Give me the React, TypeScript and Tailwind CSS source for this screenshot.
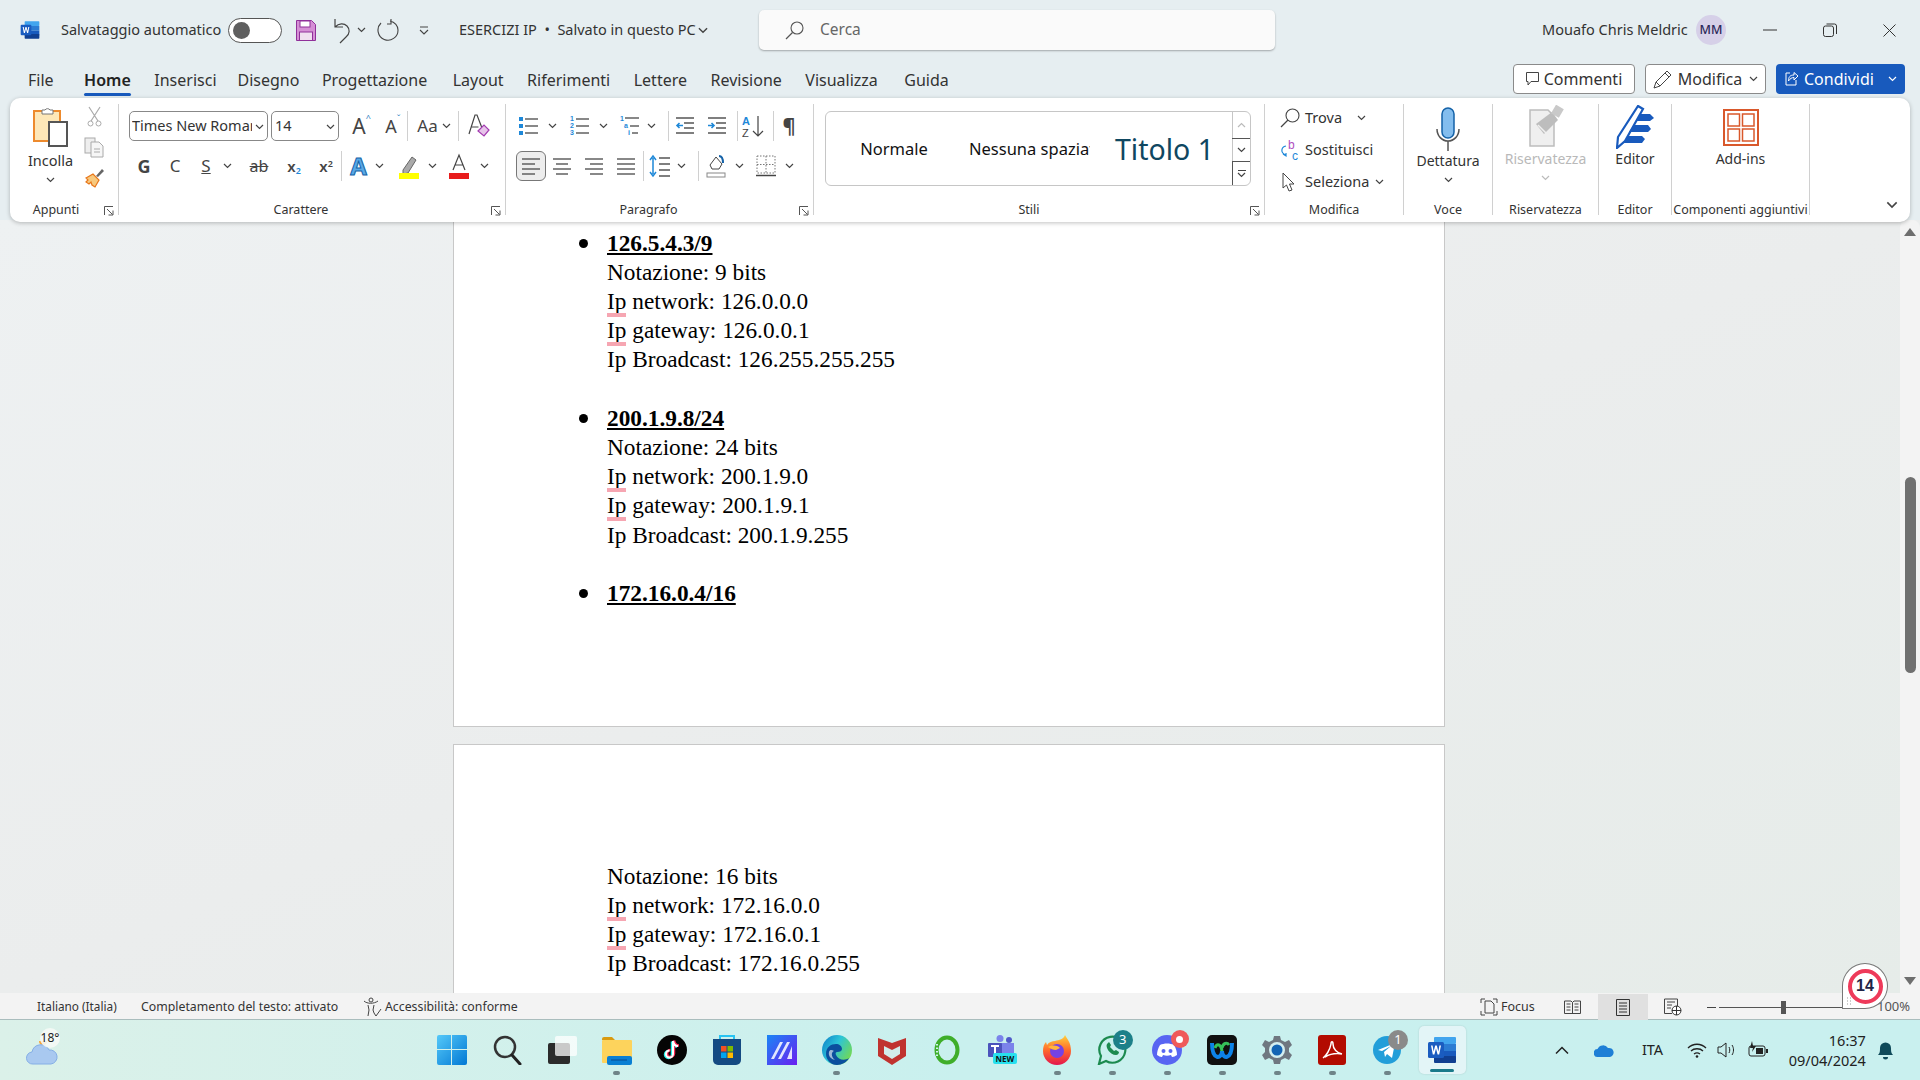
import React from "react";

const S = "#555";
const Chev = ({ c = "", color = "#444" }: { c?: string; color?: string }) => (
  <svg className={"w-[9px] h-[6px] shrink-0 " + c} viewBox="0 0 9 6"><path d="M1 1l3.5 3.5L8 1" fill="none" stroke={color} strokeWidth="1.2" /></svg>
);
const Launcher = () => (
  <svg className="w-[10px] h-[10px]" viewBox="0 0 10 10"><path d="M.5 9V.5H9M3 3l5.5 5.5M4.5 9H9V4.5" fill="none" stroke="#555" strokeWidth="1" /></svg>
);
const Div = ({ c = "h-[30px]" }: { c?: string }) => <div className={"w-px bg-[#d0d0d0] shrink-0 " + c} />;

const WordLogo = ({ c }: { c: string }) => (
  <svg className={c} viewBox="0 0 30 30">
    <rect x="7" y="2" width="22" height="7" rx="1" fill="#41a5ee" />
    <rect x="7" y="9" width="22" height="7" fill="#2b7cd3" />
    <rect x="7" y="16" width="22" height="7" fill="#185abd" />
    <rect x="7" y="21" width="22" height="7" rx="1" fill="#103f91" />
    <rect x="1" y="7" width="16" height="16" rx="1.5" fill="#1a5cc0" />
    <path d="M4 10.5l1.8 9h1.6l1.6-6 1.6 6h1.6l1.8-9h-1.6l-1 6-1.6-6H8.2l-1.6 6-1-6z" fill="#fff" />
  </svg>
);

const Lines = ({ rows, c = "w-[22px] h-[22px]" }: { rows: number[][]; c?: string }) => (
  <svg className={c} viewBox="0 0 22 22">
    {rows.map((r, i) => <path key={i} d={`M${r[0]} ${r[2]}H${r[1]}`} stroke={S} strokeWidth="1.4" fill="none" />)}
  </svg>
);

const Blue = "#1e88d8";
const BulletIcon = () => (
  <svg className="w-[22px] h-[22px]" viewBox="0 0 22 22">
    {[4, 11, 18].map((y) => <React.Fragment key={y}><rect x="1" y={y - 2} width="4" height="4" fill={Blue} /><path d={`M7 ${y}H20`} stroke={S} strokeWidth="1.4" /></React.Fragment>)}
  </svg>
);
const NumIcon = () => (
  <svg className="w-[22px] h-[22px]" viewBox="0 0 22 22">
    {[["1", 6], ["2", 13], ["3", 20]].map(([t, y]) => <React.Fragment key={t as string}><text x="1" y={y as number} fontSize="7" fontWeight="700" fill={Blue} fontFamily="Liberation Sans">{t}</text><path d={`M7 ${(y as number) - 2}H20`} stroke={S} strokeWidth="1.4" /></React.Fragment>)}
  </svg>
);
const MultiIcon = () => (
  <svg className="w-[22px] h-[22px]" viewBox="0 0 22 22">
    <text x="1" y="6" fontSize="7" fontWeight="700" fill={Blue} fontFamily="Liberation Sans">1</text>
    <path d="M6 3H20" stroke={S} strokeWidth="1.4" />
    <text x="5" y="13" fontSize="7" fontWeight="700" fill={Blue} fontFamily="Liberation Sans">a</text>
    <path d="M11 11H20" stroke={S} strokeWidth="1.4" />
    <text x="9" y="20" fontSize="7" fontWeight="700" fill={Blue} fontFamily="Liberation Sans">i</text>
    <path d="M13 18H19" stroke={S} strokeWidth="1.4" />
  </svg>
);
const IndentIcon = ({ inc }: { inc?: boolean }) => (
  <svg className="w-[22px] h-[22px] shrink-0" viewBox="0 0 22 22">
    <path d="M2 3H20M10 8H20M10 13H20M2 18H20" stroke={S} strokeWidth="1.4" />
    <path d={inc ? "M2 10.5H8M5.5 8l2.5 2.5L5.5 13" : "M9 10.5H3M5.5 8L3 10.5 5.5 13"} stroke={Blue} strokeWidth="1.6" fill="none" />
  </svg>
);

const Bar = ({ rowIcon, c }: { rowIcon: React.ReactNode; c: string }) => <div className={"flex justify-center items-center shrink-0 " + c}>{rowIcon}</div>;

function TitleBar() {
  return (
    <div className="h-[60px] flex items-center text-[14.5px] text-[#333] relative">
      <div className="ml-[20px] w-[41px]"><WordLogo c="w-[20px] h-[20px]" /></div>
      <span className="w-[167px] whitespace-nowrap">Salvataggio automatico</span>
      <div className="w-[54px] h-[25px] rounded-full border border-[#555] bg-white flex items-center pl-[4px]"><div className="w-[17px] h-[17px] rounded-full bg-[#5f5f5f]" /></div>
      <svg className="ml-[14px] w-[20px] h-[21px]" viewBox="0 0 20 21"><path d="M.5.5h15l4 4v16H.5z" fill="#d58fd5" stroke="#90309a" /><rect x="4" y="1" width="10" height="6" fill="#fff" stroke="#90309a" /><rect x="3.5" y="12" width="13" height="8.5" fill="#f0dff0" stroke="#90309a" /></svg>
      <svg className="ml-[14px] w-[22px] h-[27px]" viewBox="0 0 22 27"><path d="M5 2v8h8M5 10c4-4 9-4 12-1 3 3 3 8-1 11l-6 6" fill="none" stroke="#444" strokeWidth="1.2" /></svg>
      <Chev c="ml-[5px]" />
      <svg className="ml-[11px] w-[22px] h-[24px]" viewBox="0 0 22 24"><path d="M13 3c5 1 8 5 8 9a10 10 0 1 1-17-7M14 1v5h-4" fill="none" stroke="#444" strokeWidth="1.1" /></svg>
      <svg className="ml-[20px] w-[10px] h-[9px]" viewBox="0 0 10 9"><path d="M1 1h8M1 4l4 4 4-4" fill="none" stroke="#444" strokeWidth="1.1" /></svg>
      <span className="ml-[30px] whitespace-nowrap w-[233px]">ESERCIZI IP&nbsp; •&nbsp; Salvato in questo PC</span>
      <Chev c="w-[12px] h-[7px] ml-[5px]" />
      <div className="ml-[50px] w-[516px] h-[40px] bg-[#fafafa] rounded-[5px] shadow-[0_1px_2px_rgba(0,0,0,0.3)] flex items-center text-[#666] text-[15.5px]">
        <svg className="ml-[26px] w-[20px] h-[20px]" viewBox="0 0 20 20"><circle cx="12" cy="8" r="6" fill="none" stroke="#555" strokeWidth="1.1" /><path d="M7.5 12.5L1 19" stroke="#555" strokeWidth="1.3" /></svg>
        <span className="ml-[15px]">Cerca</span>
      </div>
      <span className="ml-[267px] w-[144px] whitespace-nowrap">Mouafo Chris Meldric</span>
      <div className="ml-[10px] w-[30px] h-[30px] rounded-full bg-[#d6d0e8] flex items-center justify-center text-[12.5px] text-[#2c2858] font-medium">MM</div>
      <svg className="ml-[37px] w-[14px] h-[2px]" viewBox="0 0 14 2"><path d="M0 1h14" stroke="#333" /></svg>
      <svg className="ml-[46px] w-[14px] h-[14px]" viewBox="0 0 14 14"><rect x=".5" y="3" width="10" height="10.5" rx="2" fill="none" stroke="#333" /><path d="M3.5 1h8a2 2 0 0 1 2 2v8" fill="none" stroke="#333" /></svg>
      <svg className="ml-[46px] w-[13px] h-[13px]" viewBox="0 0 13 13"><path d="M.5.5l12 12M12.5.5l-12 12" stroke="#333" /></svg>
    </div>
  );
}

function TabsRow() {
  const tabs: [string, string][] = [["File", ""], ["Home", "relative font-semibold text-[#222] ml-[7px]"], ["Inserisci", "relative mr-[-2.5px]"], ["Disegno", "relative mr-[-1px]"], ["Progettazione", "relative mr-[2px]"], ["Layout", "relative"], ["Riferimenti", "relative"], ["Lettere", "relative"], ["Revisione", "relative"], ["Visualizza", "relative mr-[3px]"], ["Guida", "relative"]];
  return (
    <div className="h-[38px] flex items-start text-[16px] text-[#333] relative">
      <div className="ml-[28px] flex gap-[23.5px] h-[36px] items-center mt-[2px]">
        {tabs.map(([t, c]) => (
          <div key={t} className={c}>
            {t}
            {t === "Home" && <div className="absolute left-0 right-0 top-[25px] h-[3px] rounded-full bg-[#185abd]" />}
          </div>
        ))}
      </div>
      <div className="ml-auto mr-[15px] mt-[4px] flex gap-[10px] h-[30px]">
        <div className="w-[122px] rounded-[4px] border border-[#8a8a8a] bg-white flex items-center justify-center gap-[5px]">
          <svg className="w-[13px] h-[14px]" viewBox="0 0 13 14"><path d="M.5.5h12v9H5L2 13V9.500H.5z" fill="none" stroke="#444" /></svg>Commenti
        </div>
        <div className="w-[121px] rounded-[4px] border border-[#8a8a8a] bg-white flex items-center justify-center gap-[5px]">
          <svg className="w-[20px] h-[20px]" viewBox="0 0 20 20"><path d="M1 19l2-6L14 2l4 4L7 17zM3 13l4 4M12 4l4 4" fill="none" stroke="#444" /></svg>Modifica<Chev c="ml-[2px]" />
        </div>
        <div className="w-[129px] rounded-[4px] bg-[#185abd] text-white flex items-center pl-[9px] gap-[5px]">
          <svg className="w-[14px] h-[14px]" viewBox="0 0 14 14"><path d="M5 1H1v12h10V8M13 4L9 .5V3C5 3 3.500 5 3.500 9 5 6.500 7 5.500 9 5.500V8z" fill="none" stroke="#fff" /></svg>
          Condividi<Chev c="ml-[9px]" color="#fff" />
        </div>
      </div>
    </div>
  );
}

function Group({ label, c, labelC = "", launcher, children }: { label: string; c: string; labelC?: string; launcher?: boolean; children: React.ReactNode }) {
  return (
    <div className={"relative h-[111px] shrink-0 flex flex-col border-r border-[#d0d0d0] " + c}>
      <div className="flex-1 min-h-0 -mt-px">{children}</div>
      <div className={"h-[20px] relative top-[5px] flex items-center justify-center text-[12.5px] text-[#333] whitespace-nowrap " + labelC}>{label}</div>
      {launcher && <div className="absolute right-[4px] -bottom-[1px] flex"><Launcher /></div>}
    </div>
  );
}

function Appunti() {
  return (
    <Group label="Appunti" c="w-[109px]" labelC="pr-[16px]" launcher>
      <div className="flex">
        <div className="w-[80px] flex flex-col items-center pr-[1px] pl-[2px]">
          <svg className="w-[36px] h-[41px] mt-[3px]" viewBox="0 0 36 41">
            <rect x="1" y="5" width="26" height="30" fill="#fde7b8" stroke="#ed8a2d" strokeWidth="2" />
            <path d="M9 6V4h3a3 3 0 0 1 5 0h3v4H9z" fill="#fff" stroke="#777" />
            <rect x="16" y="16" width="18" height="24" fill="#fff" stroke="#555" strokeWidth="2" />
          </svg>
          <span className="text-[14.5px] text-[#333] leading-[20px] mt-[3px]">Incolla</span>
          <Chev c="mt-[7px]" />
        </div>
        <div className="flex flex-col items-center w-[16px] ml-[-4px] mt-[2px]">
          <svg className="w-[15px] h-[21px] mt-[1px]" viewBox="0 0 15 21"><path d="M2 1l9 14M13 1L4 15" stroke="#aaa" strokeWidth="1.2" /><circle cx="3.500" cy="17.500" r="2.500" fill="none" stroke="#aaa" /><circle cx="11.500" cy="17.500" r="2.500" fill="none" stroke="#aaa" /></svg>
          <svg className="w-[21px] h-[21px] mt-[10px] shrink-0" viewBox="0 0 21 21"><rect x="1" y="1" width="10" height="15" fill="#eee" stroke="#aaa" /><path d="M7 5h8l4 4v11H7z" fill="#f6f6f6" stroke="#aaa" /><path d="M10 12h6M10 15h6" stroke="#aaa" /></svg>
          <svg className="w-[21px] h-[21px] mt-[9px] shrink-0" viewBox="0 0 21 21"><path d="M2 11l7-4 6 6-4 7-3-2-1-3-2 2-3-2 2-2z" fill="#f7c97e" stroke="#e8761a" strokeWidth="1.2" /><path d="M12 9l6-7 2 2-6 6z" fill="#666" /></svg>
        </div>
      </div>
    </Group>
  );
}

function Carattere() {
  return (
    <Group label="Carattere" c="w-[387px]" labelC="pr-[22px]" launcher>
      <div className="flex items-center h-[30px] mt-[8px] ml-[10px]">
        <div className="w-[139px] h-[30px] rounded-[5px] border border-[#888] bg-white flex items-center pl-[2px] text-[14.5px] text-[#333] relative overflow-hidden">
          <span className="whitespace-nowrap w-[120px] overflow-hidden">Times New Roman</span><Chev c="absolute right-[3px] top-[12px]" />
        </div>
        <div className="ml-[3px] w-[68px] h-[30px] rounded-[5px] border border-[#888] bg-white flex items-center pl-[3px] text-[14.5px] text-[#333] relative">14<Chev c="absolute right-[3px] top-[12px]" /></div>
        <Bar c="w-[32px] ml-[4px] text-[21px] text-[#444] relative" rowIcon={<span className="leading-none">A<sup className="text-[9px] text-[#2a7cc0] absolute top-[2px]">^</sup></span>} />
        <Bar c="w-[32px] text-[18px] text-[#444] relative" rowIcon={<span className="leading-none">A<sup className="text-[9px] text-[#2a7cc0] absolute top-[2px]">ˇ</sup></span>} />
        <Div />
        <div className="w-[39px] flex items-center justify-center gap-[5px] text-[17px] text-[#444]"><span>Aa</span></div>
        <Chev c="mr-[7px] -ml-[5px]" />
        <Div />
        <svg className="ml-[9px] w-[22px] h-[26px]" viewBox="0 0 22 26"><path d="M1 21L7 2h2l5 13" fill="none" stroke="#444" strokeWidth="1.2" /><path d="M3.500 14h7" stroke="#444" /><path d="M10 18l6-6 5 5-5 6z" fill="#e7c4ea" stroke="#a33bb0" strokeWidth="1.2" /></svg>
      </div>
      <div className="flex items-center h-[32px] mt-[9px] ml-[11px] text-[#444]">
        <span className="w-[30px] text-center font-bold text-[18px] -ml-[1px]">G</span>
        <span className="w-[32px] text-center text-[17px]">C</span>
        <span className="w-[30px] text-center text-[17px] underline">S</span>
        <Chev c="ml-[2px] mr-[12px]" />
        <span className="w-[30px] text-center text-[16px] line-through">ab</span>
        <span className="w-[34px] text-center text-[15px] font-semibold ml-[3px]">x<sub className="text-[#1e88d8] text-[9px]">2</sub></span>
        <span className="w-[30px] text-center text-[15px] font-semibold">x<sup className="text-[#444] text-[9px]">2</sup></span>
        <Div />
        <span className="w-[33px] text-center text-[24px] font-bold leading-none text-[#5aa9e6] [-webkit-text-stroke:1px_#1462a8]">A</span>
        <Chev c="mr-[16px]" />
        <svg className="w-[22px] h-[26px] -ml-[2px]" viewBox="0 0 22 26"><path d="M5 17l9-13 4 3-8 13-5 1z" fill="#aaa" stroke="#666" /><rect x="1" y="20" width="20" height="6" fill="#ffff00" /></svg>
        <Chev c="ml-[8px] mr-[13px]" />
        <svg className="w-[22px] h-[26px] -ml-[2px]" viewBox="0 0 22 26"><path d="M5 17L11 2l6 15M7 12h8" fill="none" stroke="#444" strokeWidth="1.2" /><rect x="1" y="20" width="20" height="6" fill="#e81c1c" /></svg>
        <Chev c="ml-[10px]" />
      </div>
    </Group>
  );
}

function Paragrafo() {
  return (
    <Group label="Paragrafo" c="w-[308px]" labelC="pr-[22px]" launcher>
      <div className="flex items-center h-[30px] mt-[8px] ml-[12px]">
        <BulletIcon /><Chev c="ml-[8px] mr-[12px]" /><NumIcon /><Chev c="ml-[8px] mr-[11px]" /><MultiIcon /><Chev c="ml-[6px] mr-[12px]" />
        <Div c="h-[30px] mr-[5px]" />
        <IndentIcon /><div className="w-[10px] shrink-0" /><IndentIcon inc />
        <Div c="h-[30px] ml-[9px] mr-[4px]" />
        <svg className="w-[22px] h-[24px] shrink-0" viewBox="0 0 22 24"><text x="0" y="11" fontSize="11" fontWeight="700" fill="#1e88d8" fontFamily="Liberation Sans">A</text><text x="0" y="23" fontSize="11" fill="#444" fontFamily="Liberation Sans">Z</text><path d="M16 2v20M11 17l5 5 5-5" fill="none" stroke="#444" strokeWidth="1.2" /></svg>
        <Div c="ml-[9px] h-[30px]" />
        <span className="w-[30px] text-center text-[20px] font-bold text-[#444] leading-none">¶</span>
      </div>
      <div className="flex items-center h-[32px] mt-[9px] ml-[10px]">
        <div className="w-[30px] h-[30px] rounded-[6px] border border-[#777] bg-[#ededed] flex items-center justify-center"><Lines rows={[[2, 20, 4], [2, 15, 9], [2, 20, 14], [2, 15, 19]]} /></div>
        <div className="w-[32px] flex justify-center"><Lines rows={[[2, 20, 4], [5, 17, 9], [2, 20, 14], [5, 17, 19]]} /></div>
        <div className="w-[32px] flex justify-center"><Lines rows={[[2, 20, 4], [7, 20, 9], [2, 20, 14], [7, 20, 19]]} /></div>
        <div className="w-[32px] flex justify-center"><Lines rows={[[2, 20, 4], [2, 20, 9], [2, 20, 14], [2, 20, 19]]} /></div>
        <Div c="h-[30px] ml-[1px]" />
        <svg className="ml-[5px] w-[22px] h-[24px]" viewBox="0 0 22 24"><path d="M4 4V20M1 6l3-4 3 4M1 18l3 4 3-4" fill="none" stroke="#1e88d8" strokeWidth="1.5" /><path d="M10 4H21M10 10H21M10 16H21M10 22H21" stroke={S} strokeWidth="1.4" /></svg>
        <Chev c="ml-[6px] mr-[12px]" />
        <Div c="h-[30px]" />
        <svg className="ml-[7px] w-[20px] h-[24px]" viewBox="0 0 20 24"><path d="M4 11l6-8 6 7-3 5H6z" fill="#fff" stroke="#444" /><path d="M13 2c3 0 4 3 4 7" stroke="#1462a8" strokeWidth="2" fill="none" /><rect x="1" y="19" width="18" height="4" fill="#fff" stroke="#888" /></svg>
        <Chev c="ml-[9px] mr-[12px]" />
        <svg className="w-[20px] h-[22px]" viewBox="0 0 20 22"><path d="M1 1h18v17H1zM10 1v17M1 9.500h18" fill="none" stroke="#777" strokeDasharray="1.500 1.500" /><path d="M0 20.500h20" stroke="#444" strokeWidth="1.500" /></svg>
        <Chev c="ml-[9px]" />
      </div>
    </Group>
  );
}

function Stili() {
  return (
    <Group label="Stili" c="w-[451px]" labelC="pr-[20px]" launcher>
      <div className="ml-[11px] mt-[8px] w-[426px] h-[75px] rounded-[6px] border border-[#c6c6c6] flex overflow-hidden text-[#111]">
        <div className="w-[136px] flex items-center justify-center text-[16.5px] pt-[2px]">Normale</div>
        <div className="ml-[7px] w-[121px] overflow-hidden flex items-center text-[16.5px] whitespace-nowrap pt-[2px]">Nessuna spaziatura</div>
        <div className="flex-1 flex items-center justify-start pl-[25px] text-[28.5px] text-[#0f4761] whitespace-nowrap font-normal pt-[2px]">Titolo 1</div>
        <div className="w-[18px] flex flex-col shrink-0 border-l border-[#c6c6c6]">
          <div className="h-[26px] flex items-center justify-center rotate-180"><Chev color="#bbb" /></div>
          <div className="h-[24px] border-y border-[#555] -ml-px flex items-center justify-center"><Chev /></div>
          <div className="flex-1 -ml-px border-l border-[#555] flex flex-col items-center justify-center gap-[1px]"><div className="w-[8px] h-px bg-[#444]" /><Chev /></div>
        </div>
      </div>
    </Group>
  );
}

function Modifica() {
  const row = "flex items-center h-[32px] text-[14.5px] text-[#333]";
  return (
    <Group label="Modifica" c="w-[139px]">
      <div className="pl-[16px] -mt-[1px]">
        <div className={row}>
          <svg className="w-[20px] h-[20px] mr-[5px] -ml-[1px]" viewBox="0 0 20 20"><circle cx="12.500" cy="7.500" r="6.500" fill="none" stroke="#444" strokeWidth="1.1" /><path d="M8 12L1 19" stroke="#444" strokeWidth="1.300" /></svg>
          Trova<Chev c="ml-[15px]" />
        </div>
        <div className={row}>
          <svg className="w-[20px] h-[20px] mr-[5px] -ml-[1px]" viewBox="0 0 20 20"><text x="8" y="9" fontSize="12" fill="#b04fc0" fontFamily="Liberation Sans">b</text><text x="12" y="19.500" fontSize="12" fill="#1e88d8" fontFamily="Liberation Sans">c</text><path d="M6 6C1 7 0 13 6 15M3 14l3 2 0-3" fill="none" stroke="#1e88d8" strokeWidth="1.200" /></svg>
          Sostituisci
        </div>
        <div className={row}>
          <svg className="w-[20px] h-[20px] mr-[5px] -ml-[1px]" viewBox="0 0 20 20"><path d="M3 1v15l3.500-3 2.500 6 3-1-2.500-6H14z" fill="#fff" stroke="#444" /></svg>
          Seleziona<Chev c="ml-[6px]" />
        </div>
      </div>
    </Group>
  );
}

function BigBtn({ label, labelC = "text-[#333]", icon, chev, chevColor, h = "h-[48px]" }: { label: string; labelC?: string; icon: React.ReactNode; chev?: boolean; chevColor?: string; h?: string }) {
  return (
    <div className="flex flex-col items-center">
      <div className={"flex items-end justify-center " + h}>{icon}</div>
      <span className={"text-[14px] leading-[20px] whitespace-nowrap " + labelC}>{label}</span>
      {chev && <Chev c="mt-[6px]" color={chevColor} />}
    </div>
  );
}

function Ribbon() {
  return (
    <div className="relative z-10 mx-[10px] h-[124px] bg-white rounded-[10px] shadow-[0_1px_4px_rgba(0,0,0,0.25)] flex pt-[6px] font-normal">
      <Appunti />
      <Carattere />
      <Paragrafo />
      <Stili />
      <Modifica />
      <Group label="Voce" c="w-[89px]">
        <BigBtn label="Dettatura" chev icon={
          <svg className="w-[26px] h-[44px]" viewBox="0 0 26 44"><rect x="7" y="1" width="12" height="30" rx="6" fill="#83bdee" stroke="#1462a8" strokeWidth="1.500" /><path d="M2 22c0 7 5 12 11 12s11-5 11-12M13 34v10" fill="none" stroke="#555" strokeWidth="1.500" /></svg>
        } />
      </Group>
      <Group label="Riservatezza" c="w-[106px]">
        <BigBtn label="Riservatezza" h="h-[46px]" labelC="text-[#b9b9b9]" chev chevColor="#bbb" icon={
          <svg className="w-[36px] h-[44px]" viewBox="0 0 36 44"><path d="M2 5h18l6 6v30H2z" fill="#efefef" stroke="#bdbdbd" strokeWidth="1.500" /><path d="M8 19L24 7l6 8-14 14z" fill="#bdbdbd" /><path d="M10 20l10 10" stroke="#efefef" strokeWidth="1.500" /><rect x="25" y="1" width="9" height="10" fill="#c9c9c9" transform="rotate(30 29 6)" /></svg>
        } />
      </Group>
      <Group label="Editor" c="w-[73px]">
        <BigBtn label="Editor" h="h-[46px]" labelC="text-[#333]" icon={
          <svg className="w-[38px] h-[44px]" viewBox="0 0 38 44"><path d="M22 1l5 3L9 36l-8 7 1-11z" fill="#fff" stroke="#185abd" strokeWidth="2.200" /><path d="M24 9h10l4 4-4 3H20zM18 20h14l3 4-3 3H13zM12 31h14l3 3-3 4H7z" fill="#185abd" /></svg>
        } />
      </Group>
      <Group label="Componenti aggiuntivi" c="w-[138px]">
        <BigBtn label="Add-ins" h="h-[46px]" labelC="text-[#333]" icon={
          <svg className="w-[36px] h-[37px] mb-[3px]" viewBox="0 0 36 37"><rect x="1" y="1" width="34" height="35" fill="#fff" stroke="#d9582b" strokeWidth="2" /><rect x="5" y="5" width="11.500" height="12" fill="#fff" stroke="#d9582b" strokeWidth="1.500" /><rect x="19.500" y="5" width="11.500" height="12" fill="#fff" stroke="#d9582b" strokeWidth="1.500" /><rect x="5" y="20" width="11.500" height="12" fill="#fff" stroke="#d9582b" strokeWidth="1.500" /><rect x="19.500" y="20" width="11.500" height="12" fill="#fff" stroke="#d9582b" strokeWidth="1.500" /></svg>
        } />
      </Group>
      <div className="flex-1 flex items-end justify-end pr-[12px] pb-[13px]"><Chev c="w-[12px] h-[8px]" /></div>
    </div>
  );
}

const Ip = () => (
  <span className="relative">Ip<span className="absolute left-0 right-0 top-[25px] h-[4px] bg-[#f6a6b2]" /></span>
);

function Entry({ title, lines }: { title?: string; lines: React.ReactNode[] }) {
  return (
    <div className="relative mb-[29.200px]">
      {title && <>
        <div className="absolute -left-[28px] top-[10px] w-[9px] h-[9px] rounded-full bg-black" />
        <div className="font-bold underline decoration-2 underline-offset-[2px]">{title}</div>
      </>}
      {lines.map((t, i) => <div key={i}>{t}</div>)}
    </div>
  );
}

function Doc() {
  const block = (a: string, b: string, c: string, d: string): React.ReactNode[] => [
    <>Notazione: {a}</>,
    <><Ip /> network: {b}</>,
    <><Ip /> gateway: {c}</>,
    <>Ip Broadcast: {d}</>,
  ];
  return (
    <div className="relative h-[773px] overflow-hidden bg-gradient-to-br from-[#eef1f2] via-[#ebeded] to-[#e6ece9] flex -mt-[2px] z-0 [font-family:'Liberation_Serif',serif] text-[23.300px] leading-[29.200px] text-black">
      <div className="ml-[453px] w-[992px] flex flex-col shrink-0">
        <div className="h-[507px] bg-white border-x border-b border-[#c8c8c8] pl-[153px] pt-[8.500px] shrink-0">
          <Entry title="126.5.4.3/9" lines={block("9 bits", "126.0.0.0", "126.0.0.1", "126.255.255.255")} />
          <Entry title="200.1.9.8/24" lines={block("24 bits", "200.1.9.0", "200.1.9.1", "200.1.9.255")} />
          <Entry title="172.16.0.4/16" lines={[]} />
        </div>
        <div className="h-[17px] shrink-0" />
        <div className="flex-1 bg-white border-x border-t border-[#c8c8c8] pl-[153px] pt-[116.500px]">
          <Entry lines={block("16 bits", "172.16.0.0", "172.16.0.1", "172.16.0.255")} />
        </div>
      </div>
      <div className="ml-auto w-[20px] bg-[#f3f3f3] rounded-t-[8px] flex flex-col items-center pt-[8px] relative">
        <div className="w-0 h-0 border-x-[6px] border-x-transparent border-b-[8px] border-b-[#6e6e6e]" />
        <div className="mt-[241px] w-[11px] h-[196px] rounded-full bg-[#707070]" />
        <div className="mt-auto mb-[8px] w-0 h-0 border-x-[6px] border-x-transparent border-t-[8px] border-t-[#6e6e6e]" />
      </div>
    </div>
  );
}

function StatusBar() {
  return (
    <div className="h-[27px] bg-[#f3f3f3] border-b border-[#a9bdbd] flex items-center text-[12.300px] text-[#333] relative z-10 pt-[2px]">
      <span className="ml-[37px] w-[104px] whitespace-nowrap text-[11.800px]">Italiano (Italia)</span>
      <span className="w-[223px] whitespace-nowrap">Completamento del testo: attivato</span>
      <svg className="ml-[-1px] w-[20px] h-[20px]" viewBox="0 0 20 20"><circle cx="8" cy="3" r="2" fill="none" stroke="#444" /><path d="M1 4c3 3 10 3 14 0M5 8l1 5-1 6M11 8l-1 5 1 3M11 16l2 3 5-7" fill="none" stroke="#444" /></svg>
      <span className="whitespace-nowrap w-[160px] ml-[2px]">Accessibilità: conforme</span>
      <svg className="ml-[935px] w-[18px] h-[18px] shrink-0" viewBox="0 0 18 18"><path d="M1 5V1h4M13 1h4v4M17 13v4h-4M5 17H1v-4" fill="none" stroke="#444" /><path d="M5 3h6l3 3v9H5z" fill="none" stroke="#444" /></svg>
      <span className="ml-[3px] w-[62px] text-[12.500px]">Focus</span>
      <svg className="w-[17px] h-[15px] ml-[1px]" viewBox="0 0 17 15"><path d="M.5 1h6.500L8.500 2.500 10 1h6.500v12.500H.5zM8.500 2.500v11M2.500 4h4M2.500 7h4M2.500 10h4M10.500 4h4M10.500 7h4M10.500 10h4" fill="none" stroke="#444" /></svg>
      <div className="ml-[17px] w-[50px] h-[26px] bg-[#e0e0e0] flex items-center justify-center">
        <svg className="w-[14px] h-[17px]" viewBox="0 0 14 17"><path d="M.5.500h13v16H.500zM3 4h8M3 7h8M3 10h8M3 13h8" fill="none" stroke="#333" /></svg>
      </div>
      <svg className="ml-[16px] w-[18px] h-[18px]" viewBox="0 0 18 18"><path d="M8 15.500H.500V1h13v7M3 4h8M3 7h5M3 10h4" fill="none" stroke="#444" /><circle cx="12.500" cy="12.500" r="4.500" fill="#fff" stroke="#333" /><path d="M8 12.500h9M12.500 8v9" stroke="#333" /></svg>
      <div className="ml-[25px] w-[9px] h-px bg-[#444]" />
      <div className="ml-[3px] w-[126px] h-px bg-[#555] relative shrink-0"><div className="absolute left-[62px] -top-[6px] w-[5px] h-[13px] bg-[#555]" /></div>
      <span className="ml-[32px] text-[13px] text-[#555] whitespace-nowrap">100%</span>
    </div>
  );
}

function Taskbar() {
  const dot = <div className="absolute top-[51px] w-[7px] h-[4px] rounded-full bg-[#6f8488]" />;
  const Item = ({ children, d, badge, badgeC }: { children: React.ReactNode; d?: boolean; badge?: string; badgeC?: string }) => (
    <div className="relative w-[55.060px] h-[60px] flex items-start justify-center pt-[15px] shrink-0">
      {children}
      {d && dot}
      {badge !== undefined && <div className={"absolute right-[6px] top-[10px] rounded-full flex items-center justify-center text-white text-[13px] " + badgeC}>{badge}</div>}
    </div>
  );
  return (
    <div className="h-[60px] bg-gradient-to-r from-[#dbf1e9] via-[#c9f0ee] to-[#c9f0ef] flex relative z-10 text-[#222]">
      <div className="w-[424px] shrink-0 relative">
        <svg className="absolute left-[26px] top-[17px] w-[32px] h-[28px]" viewBox="0 0 32 28"><path d="M21 4a4 4 0 1 1-8 0z" fill="#f6a43a" /><path d="M7 27a6 6 0 0 1-1-12 9 9 0 0 1 17-2 7 7 0 0 1 2 14z" fill="#a9c9f0" stroke="#84aee6" /></svg>
        <div className="absolute left-[40px] top-[8px] w-[20px] h-[20px] rounded-full bg-[#f5faf6]/90 flex items-center justify-center text-[12px] whitespace-nowrap">18°</div>
      </div>
      <div className="flex">
        <Item><svg className="w-[30px] h-[30px]" viewBox="0 0 30 30"><defs><linearGradient id="w1" x1="0" y1="0" x2="1" y2="1"><stop offset="0" stopColor="#55c9f9" /><stop offset="1" stopColor="#0278d4" /></linearGradient></defs><path d="M0 2a2 2 0 0 1 2-2h12v14H0zM15 0h13a2 2 0 0 1 2 2v12H15zM0 15h14v15H2a2 2 0 0 1-2-2zM15 15h15v13a2 2 0 0 1-2 2H15z" fill="url(#w1)" /></svg></Item>
        <Item><svg className="w-[30px] h-[30px]" viewBox="0 0 30 30"><circle cx="13" cy="12" r="10" fill="none" stroke="#333" strokeWidth="2.500" /><path d="M20 20l8 9" stroke="#222" strokeWidth="3" strokeLinecap="round" /></svg></Item>
        <Item><svg className="w-[30px] h-[30px]" viewBox="0 0 30 30"><rect x="1" y="8" width="22" height="21" rx="2" fill="#2b2b2b" /><rect x="8" y="1" width="22" height="20" rx="2" fill="#fff" fillOpacity="0.75" /></svg></Item>
        <Item d><svg className="w-[30px] h-[30px]" viewBox="0 0 30 30"><path d="M0 4a2 2 0 0 1 2-2h8l3 3h-13z" fill="#d99a10" /><rect x="0" y="5" width="30" height="23" rx="1" fill="#fdd35c" /><rect x="5" y="21" width="25" height="9" rx="2" fill="#0a7fd3" /><path d="M9 25h16" stroke="#064a8f" /></svg></Item>
        <Item><svg className="w-[30px] h-[30px]" viewBox="0 0 30 30"><circle cx="15" cy="15" r="15" fill="#050505" /><path d="M16 6v13a3.500 3.500 0 1 1-3.500-3.500M16 6c.5 3 2.500 5 5 5" fill="none" stroke="#25f4ee" strokeWidth="2.500" transform="translate(-1 .5)" /><path d="M16 6v13a3.500 3.500 0 1 1-3.500-3.500M16 6c.5 3 2.500 5 5 5" fill="none" stroke="#fe2c55" strokeWidth="2.500" transform="translate(1 -.5)" /><path d="M16 6v13a3.500 3.500 0 1 1-3.500-3.500M16 6c.5 3 2.500 5 5 5" fill="none" stroke="#fff" strokeWidth="2" /></svg></Item>
        <Item><svg className="w-[30px] h-[30px]" viewBox="0 0 30 30"><path d="M8 5V1h14v4" fill="none" stroke="#28c4f2" strokeWidth="2" /><path d="M1 4h28v21a5 5 0 0 1-5 5H6a5 5 0 0 1-5-5z" fill="#144a82" /><rect x="9" y="11" width="5.500" height="5.500" fill="#f25022" /><rect x="15.500" y="11" width="5.500" height="5.500" fill="#7fba00" /><rect x="9" y="17.500" width="5.500" height="5.500" fill="#00a4ef" /><rect x="15.500" y="17.500" width="5.500" height="5.500" fill="#ffb900" /></svg></Item>
        <Item><svg className="w-[30px] h-[30px]" viewBox="0 0 30 30"><defs><linearGradient id="w2" x1="0" y1="0" x2="1" y2="1"><stop offset="0" stopColor="#1a86f5" /><stop offset="1" stopColor="#6a1ff0" /></linearGradient></defs><rect width="30" height="30" fill="url(#w2)" /><path d="M4 24L13 7h3L7 24zM11 24L20 7h3L14 24zM20 24l5-13v13z" fill="#fff" fillOpacity="0.85" /></svg></Item>
        <Item d><svg className="w-[30px] h-[30px]" viewBox="0 0 30 30"><defs><linearGradient id="w3" x1="0" y1="0" x2="1" y2="0.600"><stop offset="0" stopColor="#0c7cc8" /><stop offset=".5" stopColor="#2cc4d8" /><stop offset="1" stopColor="#70d85a" /></linearGradient></defs><circle cx="15" cy="15" r="15" fill="url(#w3)" /><path d="M4 19c0-7 5-10 10-10 3 0 6 2 6 5 0 2-2 3-5 3-1 0-2 1-1 3 2 5 9 6 13 3-2 4-7 7-12 7-6 0-11-5-11-11z" fill="#0b4f9e" /><path d="M12 16c-3 1-3 6 1 9-4-1-7-4-6-8 1-3 3-2 5-1z" fill="#fff" fillOpacity="0.6" /></svg></Item>
        <Item><svg className="w-[28px] h-[30px]" viewBox="0 0 28 30"><path d="M0 3l14 5 14-5v18L14 30 0 21z" fill="#c0332f" /><path d="M6 11l8 4 8-4v8l-8 5-8-5z" fill="#d2ecea" /></svg></Item>
        <Item><svg className="w-[26px] h-[30px]" viewBox="0 0 26 30"><ellipse cx="13" cy="15" rx="10.500" ry="12.500" fill="none" stroke="#3fae2a" strokeWidth="4" /><path d="M3 9v12" stroke="#d0f2ee" strokeWidth="2" strokeDasharray="1.500 2" /></svg></Item>
        <Item><div className="relative w-[30px] h-[30px]">
          <svg className="w-[30px] h-[26px]" viewBox="0 0 30 26"><circle cx="13" cy="3.500" r="3.500" fill="#7b83eb" /><circle cx="22" cy="5" r="3" fill="#5059c9" /><path d="M13 8h14v10a4 4 0 0 1-4 4h-6a4 4 0 0 1-4-4z" fill="#7b83eb" /><rect x="1" y="8" width="14" height="14" rx="1" fill="#4b53bc" /><path d="M4 11h8M8 11v8" stroke="#fff" strokeWidth="2" /></svg>
          <div className="absolute left-[6px] top-[18px] w-[24px] h-[11px] bg-[#27e0ee] rounded-[2px] flex items-center justify-center text-[8px] font-bold text-[#111]">NEW</div>
        </div></Item>
        <Item d><svg className="w-[28px] h-[30px]" viewBox="0 0 28 30"><defs><linearGradient id="w4" x1="0.500" y1="0" x2="0.500" y2="1"><stop offset="0" stopColor="#ffd33d" /><stop offset=".5" stopColor="#ff6a2b" /><stop offset="1" stopColor="#e3154e" /></linearGradient></defs><path d="M22 0c2 4 6 7 6 16a14 14 0 0 1-28 0c0-4 1-7 3-9l1 3c2-3 5-4 8-4 4-1 9-2 10-6z" fill="url(#w4)" /><circle cx="14" cy="16" r="7" fill="#7542e5" /><path d="M5 12c4-2 9-2 12 1l-4 2c-3 0-5-1-8-3z" fill="#ffb53d" /></svg></Item>
        <Item d badge="3" badgeC="h-[20px] !w-[20px] bg-[#1d8089] !right-[7px]"><svg className="w-[30px] h-[30px]" viewBox="0 0 30 30"><path d="M2 29l2-8a13 13 0 1 1 5 5z" fill="none" stroke="#1c8a4f" strokeWidth="2.200" /><path d="M10 9c-2 3 3 11 9 11 2 0 3-2 3-3l-3-2-2 1-4-4 1-2-2-3z" fill="#1c8a4f" /></svg></Item>
        <Item d badge="" badgeC="w-[18px] h-[18px] bg-[#ef5a5a] !right-[6px] after:content-[''] after:w-[7px] after:h-[7px] after:bg-white after:rounded-full"><svg className="w-[30px] h-[30px]" viewBox="0 0 30 30"><circle cx="15" cy="15" r="15" fill="#5865f2" /><path d="M8 10c4-2 10-2 14 0 2 3 3 7 3 10-2 1-3 2-5 2l-1-2c-3 1-5 1-8 0l-1 2c-2 0-3-1-5-2 0-3 1-7 3-10z" fill="#fff" /><circle cx="11.500" cy="16" r="2" fill="#5865f2" /><circle cx="18.500" cy="16" r="2" fill="#5865f2" /></svg></Item>
        <Item d><svg className="w-[30px] h-[30px]" viewBox="0 0 30 30"><rect width="30" height="30" rx="5" fill="#101010" /><path d="M5 8c0 18 10 16 10 8" fill="none" stroke="#0d83e8" strokeWidth="4" /><path d="M15 16c0 8 10 10 10-8" fill="none" stroke="#0d83e8" strokeWidth="4" /><path d="M8 13c2-5 6-4 7 3M15 13c1-5 5-6 7-3" fill="none" stroke="#36c25a" strokeWidth="3" /></svg></Item>
        <Item d><svg className="w-[30px] h-[30px]" viewBox="0 0 30 30"><path d="M12 1h6l1 4 4 2 4-2 3 5-3 3v4l3 3-3 5-4-2-4 2-1 4h-6l-1-4-4-2-4 2-3-5 3-3v-4L0 10l3-5 4 2 4-2z" fill="#6f7780" /><circle cx="15" cy="15" r="8" fill="#d4eef0" /><circle cx="15" cy="15" r="5.500" fill="#1464b4" /></svg></Item>
        <Item d><svg className="w-[28px] h-[30px]" viewBox="0 0 28 30"><rect width="28" height="30" rx="3" fill="#b30b00" /><path d="M5 23c3-2 7-8 8-14 0-3 2-3 2 0 0 5 4 9 9 10-6-1-12 0-17 3" fill="none" stroke="#fff" strokeWidth="1.500" /></svg></Item>
        <Item d badge="1" badgeC="w-[20px] h-[20px] bg-[#8a8a8a] !right-[7px]"><svg className="w-[28px] h-[28px] mt-[1px]" viewBox="0 0 28 28"><circle cx="14" cy="14" r="14" fill="#229ed9" /><path d="M5 14l17-7-3 15-5-4-2 3-1-5 7-6-9 5z" fill="#fff" /></svg></Item>
        <div className="relative w-[55.060px] h-[60px] flex items-start justify-center pt-[15px] shrink-0">
          <div className="absolute top-[6px] left-[4px] w-[47px] h-[48px] rounded-[5px] bg-[#e3f5f7] shadow-[0_0_2px_rgba(0,0,0,0.15)]" />
          <WordLogo c="relative w-[30px] h-[30px]" />
          <div className="absolute top-[49px] left-[15px] w-[24px] h-[3px] rounded-full bg-[#1a7a8a]" />
        </div>
      </div>
      <div className="flex-1 flex items-center text-[14px]">
        <svg className="ml-[85px] w-[14px] h-[8px]" viewBox="0 0 14 8"><path d="M1 7.500l6-6 6 6" fill="none" stroke="#222" strokeWidth="1.500" /></svg>
        <svg className="ml-[25px] w-[20px] h-[13px]" viewBox="0 0 20 13"><path d="M4 13a4 4 0 0 1-.5-8A6 6 0 0 1 14 4a4.500 4.500 0 0 1 2 9z" fill="#1e7fd6" /></svg>
        <span className="ml-[28px] w-[37px] text-[14.500px]">ITA</span>
        <svg className="ml-[8px] w-[20px] h-[15px]" viewBox="0 0 20 15"><path d="M1 5c5-5 13-5 18 0M4 8c3-3 9-3 12 0M7 11c2-1.500 4-1.500 6 0" fill="none" stroke="#222" strokeWidth="1.300" /><circle cx="10" cy="13.500" r="1.300" fill="#222" /></svg>
        <svg className="ml-[10px] w-[20px] h-[16px]" viewBox="0 0 20 16"><path d="M1 5h3l5-4v14l-5-4H1z" fill="none" stroke="#222" /><path d="M12 5c1 2 1 4 0 6M15 3c2 3 2 7 0 10" fill="none" stroke="#222" /></svg>
        <svg className="ml-[11px] w-[20px] h-[20px]" viewBox="0 0 20 20"><rect x="1" y="6" width="16" height="10" rx="2" fill="none" stroke="#222" /><rect x="8" y="8" width="7" height="6" fill="#222" /><rect x="18" y="9" width="2" height="4" fill="#222" /><path d="M4 1L2 8h3l-1 4 4-6H5z" fill="#222" /></svg>
        <div className="ml-[18px] w-[80px] text-right text-[14.500px] leading-[20px] text-[#222] whitespace-nowrap"><div>16:37</div><div>09/04/2024</div></div>
        <svg className="ml-[11px] w-[17px] h-[19px]" viewBox="0 0 17 19"><path d="M1 14c2-2 2-4 2-7a5.500 5.500 0 0 1 11 0c0 3 0 5 2 7z" fill="#0f4a5a" /><path d="M6 16h5a2.500 2.500 0 0 1-5 0z" fill="#0f4a5a" /></svg>
      </div>
    </div>
  );
}

export default function App() {
  return (
    <div className="relative w-[1920px] h-[1080px] overflow-hidden bg-[#e6eef1] [font-family:'Noto_Sans','Open_Sans',sans-serif]">
      <TitleBar />
      <TabsRow />
      <Ribbon />
      <Doc />
      <StatusBar />
      <Taskbar />
      <div className="absolute z-20 left-[1842px] top-[963px] w-[46px] h-[46px] rounded-full rounded-bl-[2px] bg-white border border-[#777] flex items-center justify-center">
        <div className="w-[35px] h-[35px] rounded-full border-[4px] border-[#ee3a5a] flex items-center justify-center text-[#1f2448] font-bold text-[16px] [font-family:'Liberation_Sans',sans-serif]">14</div>
        <svg className="absolute left-[3px] bottom-[2px] w-[6px] h-[9px]" viewBox="0 0 6 9"><path d="M1 1h1M4 1h1M1 4h1M4 4h1M1 7h1M4 7h1" stroke="#999" /></svg>
      </div>
    </div>
  );
}
